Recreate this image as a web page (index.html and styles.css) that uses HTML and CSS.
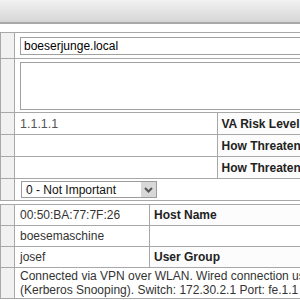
FILE: index.html
```html
<!DOCTYPE html>
<html lang="en">
<head>
    <meta charset="UTF-8">
    <title>Node Details</title>
    <link rel="stylesheet" href="styles.css">
</head>
<body>
    <div class="toolbar"></div>

    <table class="grid top">
        <tr class="r-host">
            <td class="side"></td>
            <td class="val" colspan="2"><input type="text" class="field" value="boeserjunge.local"></td>
        </tr>
        <tr class="r-notes">
            <td class="side"></td>
            <td class="val" colspan="2"><textarea class="notes"></textarea></td>
        </tr>
        <tr>
            <td class="side"></td>
            <td class="val ip">1.1.1.1</td>
            <td class="label">VA Risk Level</td>
        </tr>
        <tr>
            <td class="side"></td>
            <td class="val"></td>
            <td class="label">How Threatening</td>
        </tr>
        <tr>
            <td class="side"></td>
            <td class="val"></td>
            <td class="label">How Threatened</td>
        </tr>
        <tr>
            <td class="side"></td>
            <td class="val" colspan="2">
                <div class="select">
                    <span>0 - Not Important</span>
                    <span class="arrow">
                        <svg width="13" height="13" viewBox="0 0 13 13"><path d="M3 5l3.5 3.5L10 5" fill="none" stroke="#555" stroke-width="2"/></svg>
                    </span>
                </div>
            </td>
        </tr>
    </table>

    <table class="grid bottom">
        <tr>
            <td class="side"></td>
            <td class="val boxed">00:50:BA:77:7F:26</td>
            <td class="label">Host Name</td>
        </tr>
        <tr>
            <td class="side"></td>
            <td class="val boxed">boesemaschine</td>
            <td class="empty"></td>
        </tr>
        <tr>
            <td class="side"></td>
            <td class="val boxed">josef</td>
            <td class="label">User Group</td>
        </tr>
        <tr class="r-info">
            <td class="side"></td>
            <td class="val" colspan="2">Connected via VPN over WLAN. Wired connection using<br>(Kerberos Snooping). Switch: 172.30.2.1 Port: fe.1.1</td>
        </tr>
    </table>
</body>
</html>
```

FILE: styles.css
```css
body {
    margin: 0;
    width: 300px;
    height: 300px;
    overflow: hidden;
    background-color: #ffffff;
    font-family: "Liberation Sans", Arial, sans-serif;
    font-size: 12px;
    color: #333333;
}
.toolbar {
    height: 22px;
    background: linear-gradient(#f2f2f2, #d6d6d6);
    border-bottom: 2px solid #a9a9a9;
    margin-bottom: 8px;
}
.grid {
    width: 420px;
    border-collapse: collapse;
    table-layout: fixed;
}
.grid td {
    border: 1px solid #a8a8a8;
    padding: 0 0 0 5px;
    white-space: nowrap;
    overflow: hidden;
}
.grid td.side {
    width: 8px;
    background-color: #f1f1f1;
}
.top .r-host td {
    height: 25px;
}
.top .r-notes td {
    height: 53px;
}
.top tr td {
    height: 21px;
}
.top .label {
    width: 198px;
    padding-left: 4px;
}
.label {
    font-weight: bold;
    color: #222222;
    background-color: #fcfcfc;
}
.field {
    box-sizing: border-box;
    width: 100%;
    height: 18px;
    margin: 0;
    border: 1px solid #a0a0a0;
    padding: 0 3px;
    font-family: "Liberation Sans", Arial, sans-serif;
    font-size: 12px;
    color: #000000;
}
.notes {
    display: block;
    box-sizing: border-box;
    width: 100%;
    height: 48px;
    margin: 0;
    border: 1px solid #a0a0a0;
    resize: none;
}
.ip {
    color: #555555;
    font-size: 12.5px;
}
.select {
    display: flex;
    align-items: center;
    justify-content: space-between;
    box-sizing: border-box;
    width: 136px;
    height: 17px;
    margin-left: 1px;
    border: 1px solid #9c9c9c;
    padding-left: 4px;
    color: #111111;
}
.arrow {
    display: flex;
    align-items: center;
    justify-content: center;
    width: 15px;
    height: 15px;
    background-color: #d8d8d8;
}
.bottom {
    margin-top: 3px;
}
.bottom td {
    height: 20px;
}
.bottom .val.boxed {
    width: 129px;
}
.bottom .empty {
    border: none;
    border-top: 1px solid #a8a8a8;
    border-bottom: 1px solid #a8a8a8;
}
.bottom .label {
    padding-left: 4px;
}
.bottom .r-info td {
    height: 30px;
    line-height: 14px;
}
```
